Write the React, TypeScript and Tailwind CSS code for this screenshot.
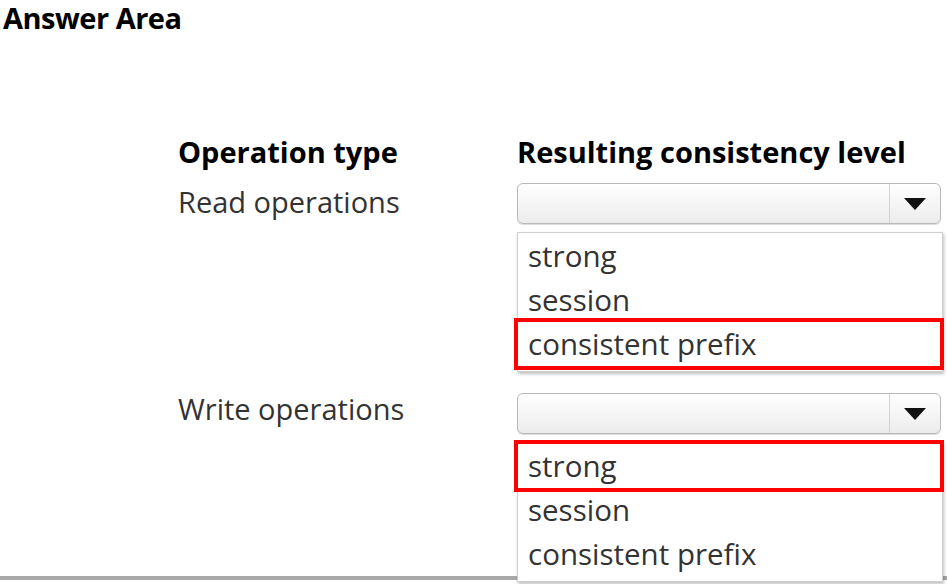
const font = { fontFamily: '"Open Sans", "Noto Sans", sans-serif' }

type Props = { options: string[]; selected: number }

function Dropdown({ options, selected }: Props) {
  return (
    <div className="flex flex-col">
      <div className="flex h-[41px] w-[424px] rounded-[6px] border border-[#b9b9b9] bg-gradient-to-b from-white to-[#ececec] shadow-[0_1px_1px_rgba(0,0,0,0.15)]">
        <div className="flex-1" />
        <div className="flex w-[51px] items-center justify-center border-l border-[#d2d2d2]">
          <svg width="22" height="12" viewBox="0 0 22 12">
            <polygon points="0,0 22,0 11,12" fill="#111" />
          </svg>
        </div>
      </div>
      <div className="mt-[8px] w-[426px] border border-[#d0d0d0] bg-white pt-[1px] pb-[5px] shadow-[1px_2px_3px_rgba(0,0,0,0.25)]">
        {options.map((o, i) => (
          <div
            key={o}
            className={`mr-[2px] flex h-[44px] items-center pl-[10px] text-[29.5px] text-[#333] ${
              i === selected ? 'outline-[4px] outline-solid outline-[#f00]' : ''
            }`}
          >
            {o}
          </div>
        ))}
      </div>
    </div>
  )
}

const OPTIONS = ['strong', 'session', 'consistent prefix']

export default function App() {
  return (
    <div className="h-[584px] w-[947px] overflow-hidden bg-white" style={font}>
      <div className="h-[580px] border-b-[4px] border-[#a9a9a9]">
        <h2 className="pl-[3px] pt-[1px] text-[29px] font-bold leading-[34px] tracking-[-0.5px] text-black">
          Answer Area
        </h2>
        <div className="mt-[97px] grid grid-cols-[339px_430px] pl-[178px]">
          <div className="text-[29px] font-bold leading-[40px] text-black">Operation type</div>
          <div className="text-[29px] font-bold leading-[40px] text-black">Resulting consistency level</div>

          <div className="mt-[10px] text-[29px] leading-[40px] text-[#333]">Read operations</div>
          <div className="mt-[11px]">
            <Dropdown options={OPTIONS} selected={2} />
          </div>

          <div className="mt-[17px] text-[29px] leading-[40px] text-[#333]">Write operations</div>
          <div className="mt-[21px]">
            <Dropdown options={OPTIONS} selected={0} />
          </div>
        </div>
      </div>
    </div>
  )
}
